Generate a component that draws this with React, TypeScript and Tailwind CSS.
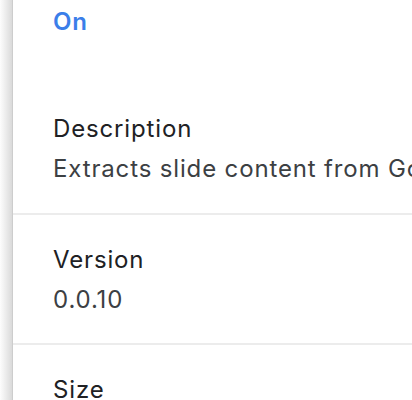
import React from 'react';

const rows = [
  { label: 'Version', value: '0.0.10' },
];

const App: React.FC = () => {
  return (
    <div
      className="flex h-[400px] w-[412px] overflow-hidden bg-white"
      style={{ fontFamily: 'Inter, "Noto Sans", sans-serif' }}
    >
      {/* card shadow on the left */}
      <div className="w-[12px] shrink-0 bg-gradient-to-r from-[#fdfdfd] to-[#dadada]" />

      <div className="flex-1 min-w-0 border-l border-[#cdcdcd] bg-white text-[24px] leading-[40px] tracking-[0.85px]">
        <div className="pl-[40px] pt-[2px] font-semibold text-[#3b7ee9]">On</div>

        <div className="border-b-2 border-[#ececec] pl-[40px] pt-[67px] pb-[24px]">
          <div className="text-[#202124]">Description</div>
          <div className="whitespace-nowrap text-[#3c4043]">
            Extracts slide content from Google Slides presentations
          </div>
        </div>

        {rows.map((row) => (
          <div key={row.label} className="border-b-2 border-[#ececec] pl-[40px] pt-[25px] pb-[23px]">
            <div className="text-[#202124]">{row.label}</div>
            <div className="text-[#3c4043]">{row.value}</div>
          </div>
        ))}

        <div className="pl-[40px] pt-[25px]">
          <div className="text-[#202124]">Size</div>
        </div>
      </div>
    </div>
  );
};

export default App;
